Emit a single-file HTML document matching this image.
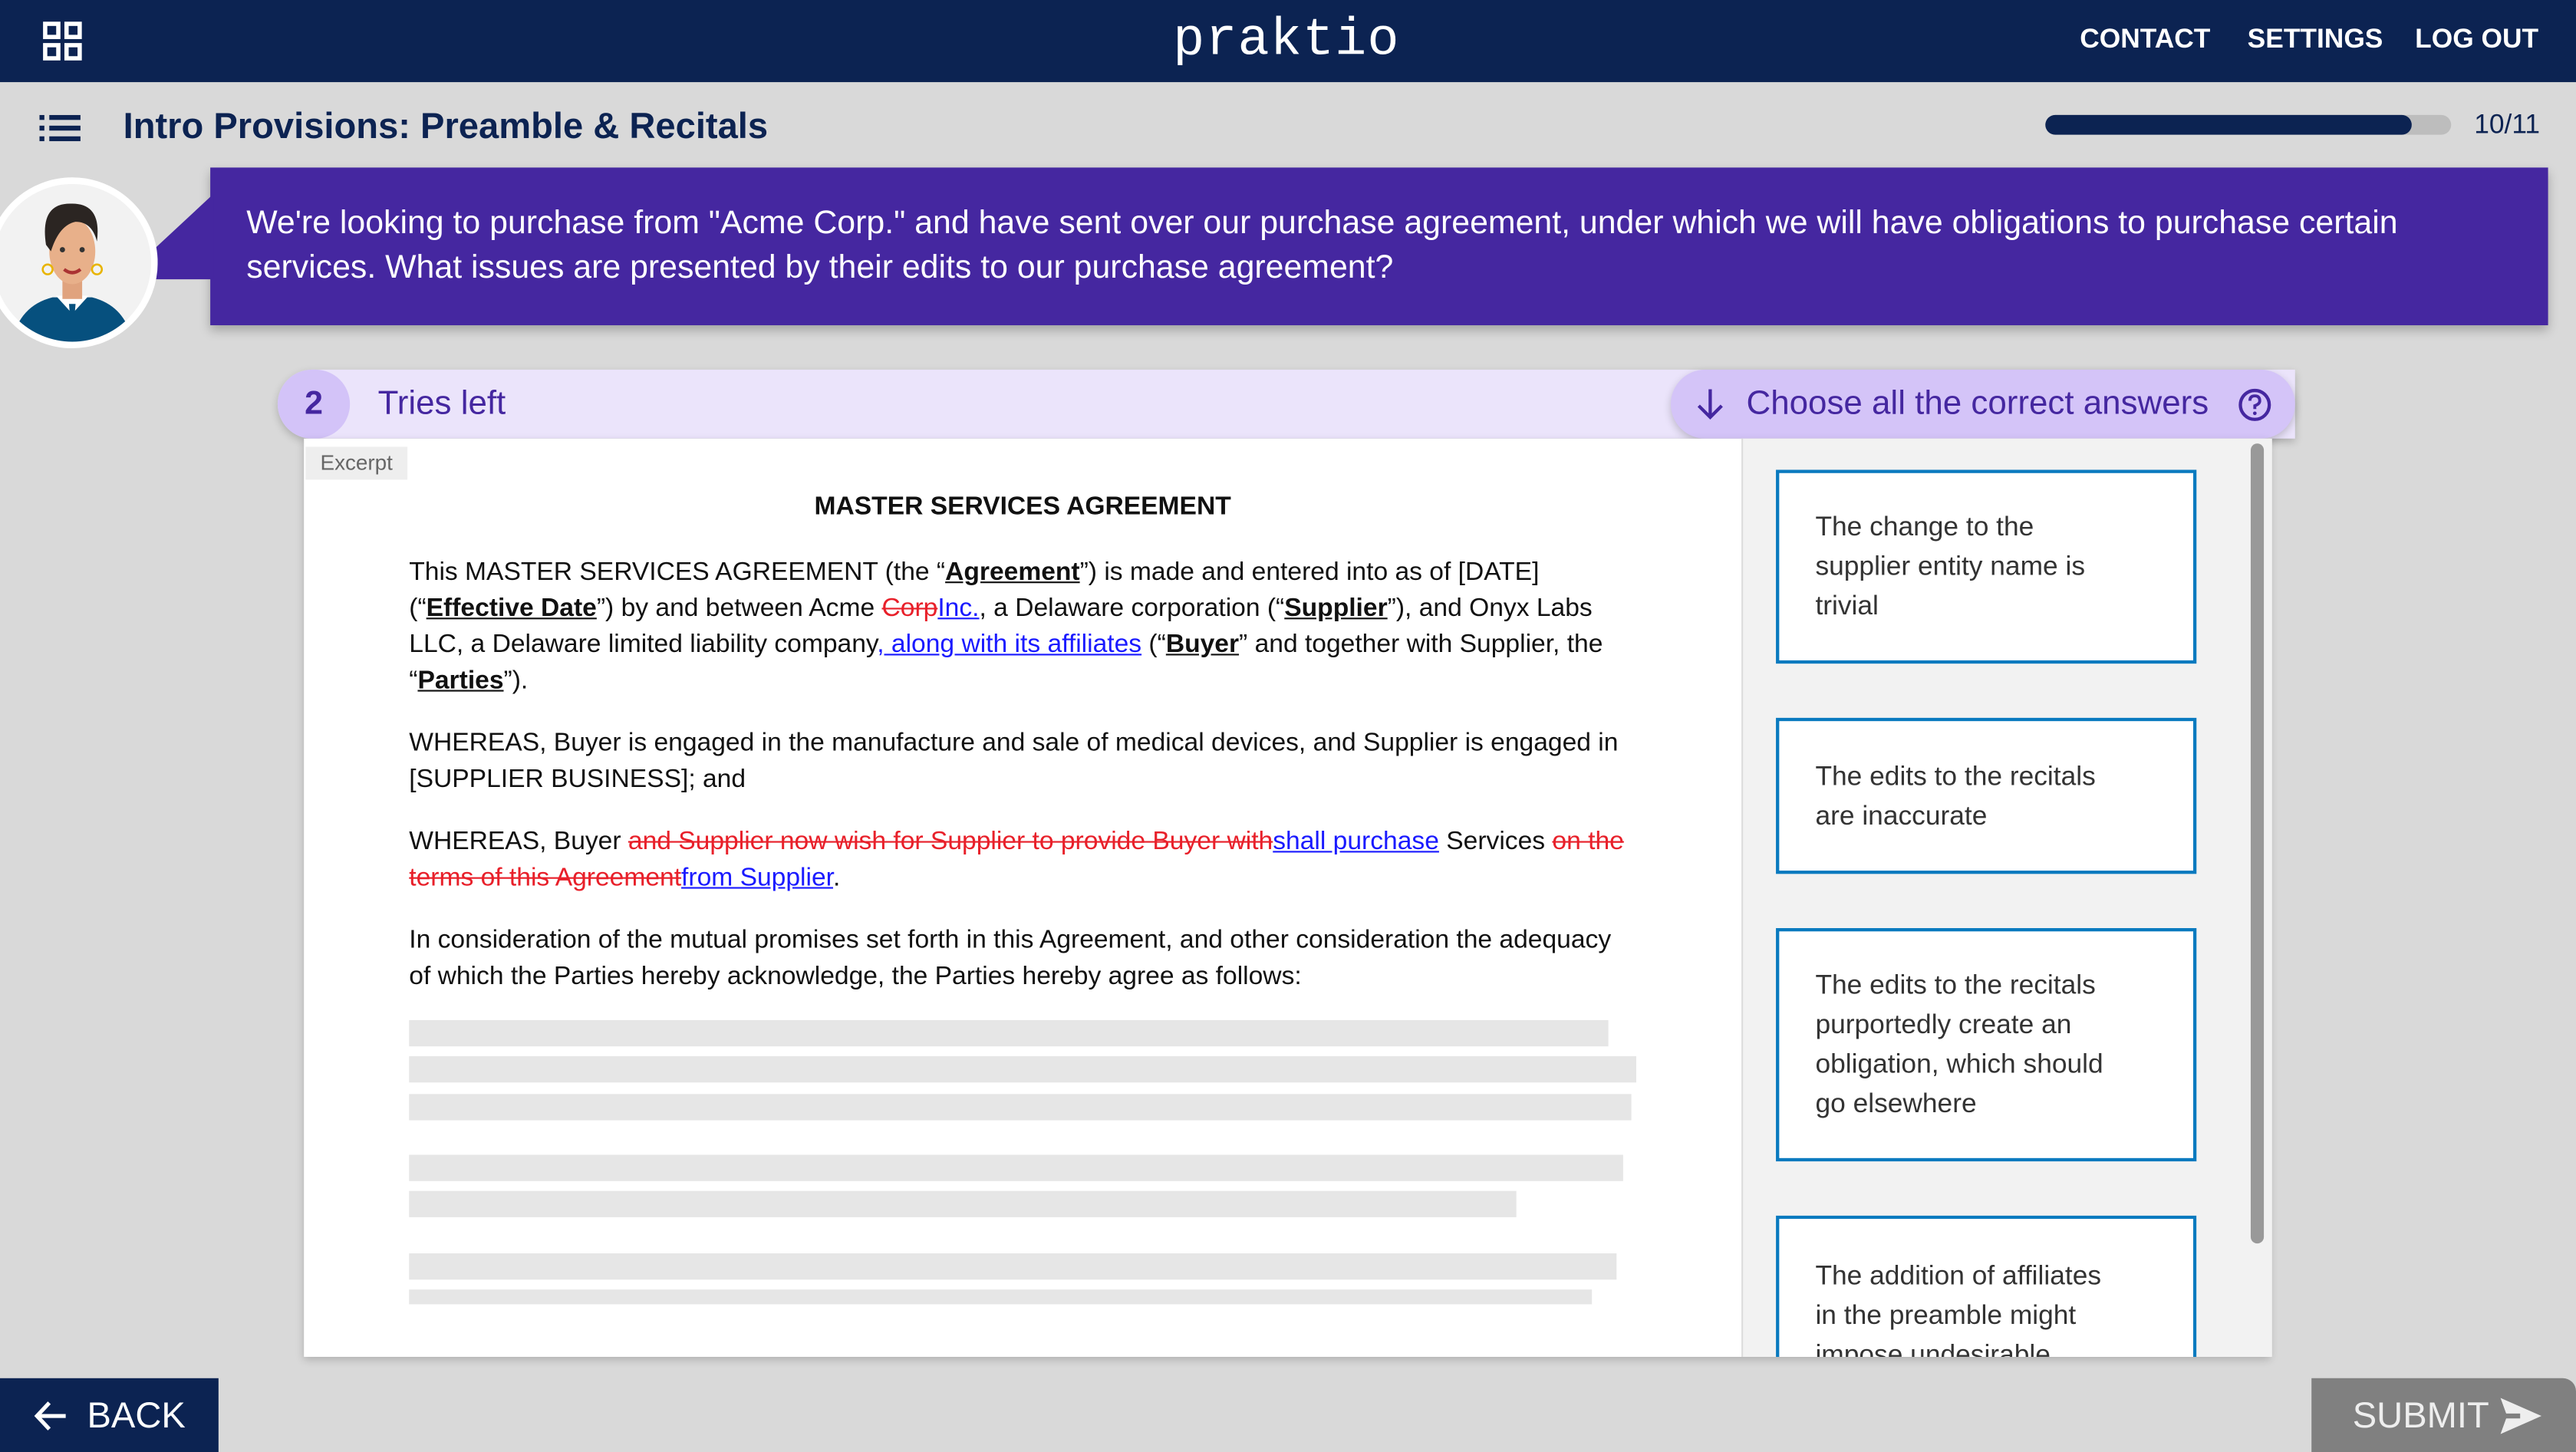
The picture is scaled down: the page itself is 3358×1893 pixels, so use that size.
<!DOCTYPE html>
<html><head><meta charset="utf-8"><style>
html,body{margin:0;padding:0;width:3358px;height:1892px;overflow:hidden;background:#d9d9d9}
#s{position:absolute;left:0;top:0;width:1568px;height:884px;transform:scale(2.14158);transform-origin:0 0;font-family:"Liberation Sans",sans-serif;background:#d9d9d9;overflow:hidden}
.a{position:absolute}
.doc p{margin:0 0 16px 0;font-size:15.7px;line-height:22px;color:#111}
.del{color:#e8202a;text-decoration:line-through}
.ins{color:#1a1aff;text-decoration:underline}
.b{font-weight:bold;text-decoration:underline}
.ans{position:absolute;left:1081px;width:256px;border:2px solid #0a7abf;background:#fff;box-sizing:border-box;padding:0 10px 0 22px;font-size:16.5px;line-height:24px;color:#333;display:flex;align-items:center;white-space:nowrap}
.bar{position:absolute;left:249px;height:16px;background:#e6e6e6}
</style></head><body><div id="s">
<div class="a" style="left:0;top:0;width:1568px;height:50px;background:#0c2352"></div>
<svg class="a" style="left:26px;top:13px" width="25" height="25" viewBox="0 0 25 25"><g fill="none" stroke="#fff" stroke-width="2.6"><rect x="1.5" y="1.5" width="8" height="8"/><rect x="14.5" y="1.5" width="8" height="8"/><rect x="1.5" y="14.5" width="8" height="8"/><rect x="14.5" y="14.5" width="8" height="8"/></g></svg>
<div class="a" style="left:683px;top:6px;width:200px;text-align:center;color:#fff;font-family:'Liberation Mono',monospace;font-size:32px;letter-spacing:0.5px">praktio</div>
<div class="a" style="left:1266px;top:15px;color:#fff;font-weight:bold;font-size:16.5px">CONTACT</div>
<div class="a" style="left:1368px;top:15px;color:#fff;font-weight:bold;font-size:16.5px">SETTINGS</div>
<div class="a" style="left:1470px;top:15px;color:#fff;font-weight:bold;font-size:16.5px">LOG OUT</div>
<svg class="a" style="left:24px;top:70px" width="25" height="16" viewBox="0 0 25 16"><g fill="#0c2352"><rect x="0" y="0" width="3" height="3"/><rect x="6" y="0" width="19" height="3"/><rect x="0" y="6.5" width="3" height="3"/><rect x="6" y="6.5" width="19" height="3"/><rect x="0" y="13" width="3" height="3"/><rect x="6" y="13" width="19" height="3"/></g></svg>
<div class="a" style="left:75px;top:64px;color:#0c2352;font-weight:bold;font-size:22px">Intro Provisions: Preamble &amp; Recitals</div>
<div class="a" style="left:1245px;top:70px;width:247px;height:12px;border-radius:6px;background:#bdbdbd"></div>
<div class="a" style="left:1245px;top:70px;width:223px;height:12px;border-radius:6px;background:#0c2352"></div>
<div class="a" style="left:1506px;top:67px;color:#0c2352;font-size:16.5px">10/11</div>
<div class="a" style="left:128px;top:102px;width:1423px;height:96px;background:#4527a0;box-shadow:0 3px 6px rgba(0,0,0,.25)"></div>
<svg class="a" style="left:74px;top:118px" width="56" height="56"><polygon points="56,0 56,52 0,52" fill="#4527a0"/></svg>
<div class="a" style="left:150px;top:123px;width:1335px;color:#fff;font-size:20px;line-height:27px">We're looking to purchase from "Acme Corp." and have sent over our purchase agreement, under which we will have obligations to purchase certain services. What issues are presented by their edits to our purchase agreement?</div>
<svg class="a" style="left:-8px;top:107px" width="104" height="107" viewBox="0 0 104 107"><circle cx="52" cy="53" r="50" fill="#f2f2f2" stroke="#fff" stroke-width="4"/><clipPath id="c"><circle cx="52" cy="53" r="48"/></clipPath><g clip-path="url(#c)"><path d="M14 110 Q16 80 40 74 L64 74 Q88 80 90 110Z" fill="#06507e"/><path d="M42 73 L52 84 L62 73Z" fill="#fff"/><path d="M50 78 L54 78 L53 90 L51 90Z" fill="#06507e"/><rect x="46" y="62" width="12" height="13" fill="#e0a37e"/><ellipse cx="52" cy="46" rx="14" ry="20" fill="#e8b08a"/><path d="M36 42 Q32 16 52 17 Q70 17 67 40 Q64 28 54 28 Q44 30 39 46Z" fill="#2b2522"/><circle cx="46" cy="45" r="1.6" fill="#333"/><circle cx="58" cy="45" r="1.6" fill="#333"/><path d="M47 57 Q52 61 57 57" stroke="#a33" stroke-width="2" fill="none"/><circle cx="37" cy="57" r="3" fill="none" stroke="#e8b400" stroke-width="1.2"/><circle cx="67" cy="57" r="3" fill="none" stroke="#e8b400" stroke-width="1.2"/></g></svg>
<div class="a" style="left:169px;top:225px;width:1228px;height:42px;border-radius:21px 0 0 21px;background:#ebe4fb;box-shadow:0 2px 5px rgba(0,0,0,.2)"></div>
<div class="a" style="left:169px;top:225px;width:44px;height:42px;border-radius:21px;background:#d3c3f8;color:#4527a0;font-weight:bold;font-size:20px;text-align:center;line-height:42px">2</div>
<div class="a" style="left:230px;top:234px;color:#4527a0;font-size:20.5px">Tries left</div>
<div class="a" style="left:1017px;top:225px;width:380px;height:42px;border-radius:21px;background:#d4c4f8;box-shadow:0 2px 5px rgba(0,0,0,.2)"></div>
<svg class="a" style="left:1032px;top:236px" width="18" height="20" viewBox="0 0 18 20"><path d="M9 1 V18 M2 11 L9 18 L16 11" stroke="#4527a0" stroke-width="2" fill="none"/></svg>
<div class="a" style="left:1063px;top:234px;color:#4527a0;font-size:20.5px">Choose all the correct answers</div>
<svg class="a" style="left:1362px;top:236px" width="21" height="21" viewBox="0 0 21 21"><circle cx="10.5" cy="10.5" r="8.8" stroke="#4527a0" stroke-width="2" fill="none"/><path d="M7.5 8 Q7.5 5 10.5 5 Q13.5 5 13.5 8 Q13.5 10 10.5 11 V13" stroke="#4527a0" stroke-width="1.8" fill="none"/><circle cx="10.5" cy="15.6" r="1.1" fill="#4527a0"/></svg>
<div class="a" style="left:185px;top:267px;width:1197px;height:559px;background:#fff;box-shadow:0 2px 5px rgba(0,0,0,.2)"></div>
<div class="a" style="left:1060px;top:267px;width:322px;height:559px;background:#f2f2f2;border-left:1px solid #ddd;overflow:hidden"></div>
<div class="a" style="left:1370px;top:270px;width:8px;height:487px;border-radius:4px;background:#999"></div>
<div class="a" style="left:186px;top:272px;width:62px;height:20px;background:#eee;color:#666;font-size:13px;text-align:center;line-height:20px">Excerpt</div>
<div class="a" style="left:185px;top:300px;width:875px;text-align:center;font-weight:bold;font-size:15.7px;color:#111">MASTER SERVICES AGREEMENT</div>
<div class="a doc" style="left:249px;top:338px;width:748px">
<p>This MASTER SERVICES AGREEMENT (the “<span class="b">Agreement</span>”) is made and entered into as of [DATE] (“<span class="b">Effective Date</span>”) by and between Acme <span class="del">Corp</span><span class="ins">Inc.</span>, a Delaware corporation (“<span class="b">Supplier</span>”), and Onyx Labs LLC, a Delaware limited liability company<span class="ins">, along with its affiliates</span> (“<span class="b">Buyer</span>” and together with Supplier, the “<span class="b">Parties</span>”).</p>
<p style="margin-top:16px">WHEREAS, Buyer is engaged in the manufacture and sale of medical devices, and Supplier is engaged in [SUPPLIER BUSINESS]; and</p>
<p>WHEREAS, Buyer <span class="del">and Supplier now wish for Supplier to provide Buyer with</span><span class="ins">shall purchase</span> Services <span class="del">on the terms of this Agreement</span><span class="ins">from Supplier</span>.</p>
<p>In consideration of the mutual promises set forth in this Agreement, and other consideration the adequacy of which the Parties hereby acknowledge, the Parties hereby agree as follows:</p>
</div>
<div class="bar" style="top:621px;width:730px"></div>
<div class="bar" style="top:643px;width:747px"></div>
<div class="bar" style="top:666px;width:744px"></div>
<div class="bar" style="top:703px;width:739px"></div>
<div class="bar" style="top:725px;width:674px"></div>
<div class="bar" style="top:763px;width:735px"></div>
<div class="bar" style="top:785px;width:720px;height:9px"></div>
<div class="ans" style="top:286px;height:118px">The change to the<br>supplier entity name is<br>trivial</div>
<div class="ans" style="top:437px;height:95px">The edits to the recitals<br>are inaccurate</div>
<div class="ans" style="top:565px;height:142px">The edits to the recitals<br>purportedly create an<br>obligation, which should<br>go elsewhere</div>
<div class="a" style="left:1081px;top:740px;width:256px;height:86px;overflow:hidden"><div class="ans" style="left:0;top:0;height:140px;align-items:flex-start;padding-top:23px">The addition of affiliates<br>in the preamble might<br>impose undesirable</div></div>
<div class="a" style="left:0;top:839px;width:133px;height:45px;background:#0c2352"></div>
<svg class="a" style="left:20px;top:851px" width="22" height="22" viewBox="0 0 22 22"><path d="M20 11 H3 M10 3 L2.5 11 L10 19" stroke="#fff" stroke-width="2.4" fill="none"/></svg>
<div class="a" style="left:53px;top:849px;color:#fff;font-size:22px">BACK</div>
<div class="a" style="left:1407px;top:839px;width:161px;height:45px;background:#808080;border-radius:0 8px 0 0"></div>
<div class="a" style="left:1432px;top:849px;color:#eee;font-size:22px">SUBMIT</div>
<svg class="a" style="left:1522px;top:851px" width="26" height="22" viewBox="0 0 26 22"><polygon points="0,0 25,11 0,22 4,11" fill="#eee"/><polygon points="4,11 0,0 0,22" fill="#808080"/><rect x="2" y="9.5" width="10" height="3" fill="#808080"/></svg>
</div></body></html>
